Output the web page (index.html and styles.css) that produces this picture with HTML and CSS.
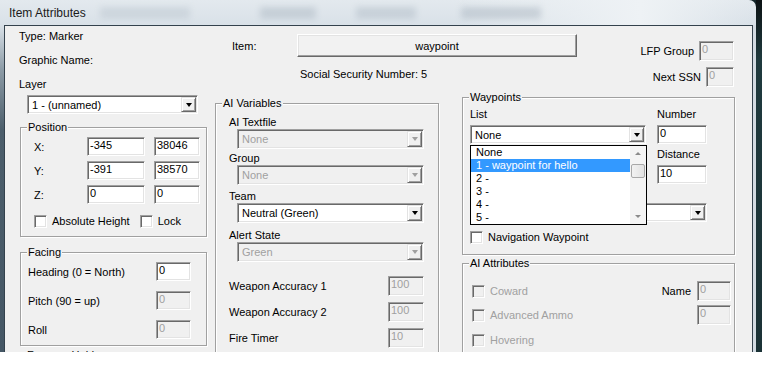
FILE: index.html
```html
<!DOCTYPE html>
<html lang="en">
<head>
  <title>Item Attributes</title>
  <meta charset='utf-8'>
  <link rel="stylesheet" href="styles.css">
</head>
<body>
  <div class='screen'>
    <div class='win'>
      <div class='titlebar'>
        <span class='title'>Item Attributes</span>
        <span class='haze haze_1'></span>
        <span class='haze haze_2'></span>
        <span class='haze haze_3'></span>
        <span class='haze haze_4'></span>
      </div>

      <div class='client'>
        <!-- left column : type, layer, position, facing -->
        <div class='col col_left'>
          <div class='type'>Type: Marker</div>
          <div class='graphic'>Graphic Name:</div>
          <div class='layer_label'>Layer</div>
          <div class='combo layer_combo'><span class='value'>1 - (unnamed)</span><span class='drop'></span></div>

          <fieldset class='group position'>
            <legend>Position</legend>
            <div class='pos_body'>
              <div class='pos_grid'>
                <span>X:</span><span class='edit'>-345</span><span class='edit'>38046</span>
                <span>Y:</span><span class='edit'>-391</span><span class='edit'>38570</span>
                <span>Z:</span><span class='edit'>0</span><span class='edit'>0</span>
              </div>
              <div class='checks'>
                <span class='check'><span class='box'></span>Absolute Height</span>
                <span class='check'><span class='box'></span>Lock</span>
              </div>
            </div>
          </fieldset>

          <fieldset class='group facing'>
            <legend>Facing</legend>
            <div class='facing_grid'>
              <span>Heading (0 = North)</span><span class='edit'>0</span>
              <span>Pitch (90 = up)</span><span class='edit disabled'>0</span>
              <span>Roll</span><span class='edit disabled'>0</span>
            </div>
          </fieldset>
          <div class='cut'>Forearm Hold</div>
        </div>

        <!-- middle column : item button, ssn, ai variables -->
        <div class='col col_mid'>
          <div class='item_row'>
            <span class='item_label'>Item:</span>
            <span class='button item_button'>waypoint</span>
          </div>
          <div class='ssn'>Social Security Number: 5</div>

          <fieldset class='group aivars'>
            <legend>AI Variables</legend>
            <div class='aivars_body'>
              <div class='lab lab_textfile'>AI Textfile</div>
              <div class='combo disabled'><span class='value'>None</span><span class='drop'></span></div>
              <div class='lab lab_group'>Group</div>
              <div class='combo disabled'><span class='value'>None</span><span class='drop'></span></div>
              <div class='lab lab_team'>Team</div>
              <div class='combo'><span class='value'>Neutral (Green)</span><span class='drop'></span></div>
              <div class='lab lab_alert'>Alert State</div>
              <div class='combo disabled'><span class='value'>Green</span><span class='drop'></span></div>

              <div class='num_row first'><span>Weapon Accuracy 1</span><span class='edit disabled'>100</span></div>
              <div class='num_row'><span>Weapon Accuracy 2</span><span class='edit disabled'>100</span></div>
              <div class='num_row'><span>Fire Timer</span><span class='edit disabled'>10</span></div>
            </div>
          </fieldset>
        </div>

        <!-- right column : lfp, waypoints, ai attributes -->
        <div class='col col_right'>
          <div class='side_row lfp_row'><span>LFP Group</span><span class='edit disabled'>0</span></div>
          <div class='side_row nssn_row'><span>Next SSN</span><span class='edit disabled'>0</span></div>

          <fieldset class='group waypoints'>
            <legend>Waypoints</legend>
            <div class='wp_body'>
              <div class='wp_cols'>
                <div class='wp_left'>
                  <div>List</div>
                  <div class='combo wp_list'><span class='value'>None</span><span class='drop'></span></div>
                  <div class='combo wp_path'><span class='value'></span><span class='drop'></span></div>

                  <!-- open dropdown of the list combo -->
                  <div class='droplist'>
                    <div class='items'>
                      <div class='opt'>None</div>
                      <div class='opt selected'>1 - waypoint for hello</div>
                      <div class='opt'>2 -</div>
                      <div class='opt'>3 -</div>
                      <div class='opt'>4 -</div>
                      <div class='opt'>5 -</div>
                    </div>
                    <div class='scroll'>
                      <span class='arrow up'></span>
                      <span class='thumb'></span>
                      <span class='arrow down'></span>
                    </div>
                  </div>
                </div>
                <div class='wp_right'>
                  <div>Number</div>
                  <span class='edit wp_num'>0</span>
                  <div class='wp_dist_label'>Distance</div>
                  <span class='edit wp_dist'>10</span>
                </div>
              </div>
              <span class='check nav_check'><span class='box'></span>Navigation Waypoint</span>
            </div>
          </fieldset>

          <fieldset class='group aiattr'>
            <legend>AI Attributes</legend>
            <div class='aiattr_body'>
              <div class='attr_row'>
                <span class='check disabled'><span class='box'></span>Coward</span>
                <span class='name_box'><span>Name</span><span class='edit disabled'>0</span></span>
              </div>
              <div class='attr_row second'>
                <span class='check disabled'><span class='box'></span>Advanced Ammo</span>
                <span class='edit disabled'>0</span>
              </div>
              <div class='attr_row third'>
                <span class='check disabled'><span class='box'></span>Hovering</span>
              </div>
            </div>
          </fieldset>
        </div>
      </div>
    </div>
    <div class='desk'></div>
  </div>
</body>
</html>
```

FILE: styles.css
```css
*, ::before, ::after {
  box-sizing: border-box;
  margin: 0; padding: 0;
}

body {
  background: #fff;
  font: 11px/14px "Liberation Sans", Arial, sans-serif;
  color: #000;
}

/* window and the dark desktop strip behind it */
.screen {
  display: flex;
  width: 762px; height: 352px;
  overflow: hidden;
  background: #14262a;
}
.win {
  display: flex; flex-direction: column;
  width: 756px; height: 352px;
  padding: 0 3px 0 4px;
  border-radius: 0 7px 0 0;
  background: linear-gradient(to bottom, #e3e9ee 0, #d9e1e8 25px, #8c9ba6 70px, #4c5e6b 130px, #455765 352px);
}
.desk {
  flex: 1;
  background: linear-gradient(to bottom, #0c1214 0, #1f3a3e 60px, #1b3236 352px);
}

.titlebar {
  display: flex; align-items: center;
  height: 25px;
  padding-left: 5px;
  overflow: hidden;
  background: linear-gradient(to right, transparent 60%, #eef2f5 85%, transparent);
}
.title {
  font: 12px "Liberation Sans", Arial, sans-serif;
  color: #1a1a1a;
  flex-shrink: 0;
}
/* blurred taskbar seen through the glass */
.haze {
  height: 12px;
  flex-shrink: 0;
  filter: blur(3px);
  opacity: .45;
}
.haze_1 { width: 90px; margin-left: 14px; background: #b9c4cd; }
.haze_2 { width: 56px; margin-left: 70px; background: #a9b5c0; }
.haze_3 { width: 60px; margin-left: 40px; background: #adb9c4; }
.haze_4 { width: 80px; margin-left: 45px; background: #a6b2bd; }

.client {
  display: flex; align-items: flex-start;
  flex: 1;
  padding-left: 14px;
  overflow: hidden;
  background: #f0f0f0;
  border: 1px solid #34424d; border-bottom: 0;
  box-shadow: 3px 0 0 #d3dbe2;
}
.col { flex-shrink: 0; }

/* shared controls */
.group {
  border: 1px solid #a0a0a0;
  box-shadow: inset 1px 1px #fff, 1px 1px #fff;
}
.group > legend {
  margin-left: 6px; padding: 0 1px;
  line-height: 14px;
  background: #f0f0f0;
}
.edit {
  display: block;
  height: 19px;
  padding-left: 2px;
  line-height: 15px;
  background: #fff;
  border: 1px solid; border-color: #a0a0a0 #fff #fff #a0a0a0;
  box-shadow: inset 1px 1px #696969, inset -1px -1px #e3e3e3;
}
.edit.disabled {
  background: #f0f0f0;
  color: #a0a0a0;
}
.combo {
  display: flex; align-items: stretch;
  height: 20px;
  padding: 1px;
  background: #fff;
  border: 1px solid; border-color: #a0a0a0 #fff #fff #a0a0a0;
  box-shadow: inset 1px 1px #696969, inset -1px -1px #e3e3e3;
}
.combo > .value {
  flex: 1;
  padding-left: 3px;
  line-height: 16px;
  white-space: nowrap; overflow: hidden;
}
.combo.disabled { background: #f0f0f0; color: #a0a0a0; }
.drop {
  display: flex; align-items: center; justify-content: center;
  width: 15px;
  background: #f0f0f0;
  border: 1px solid; border-color: #e3e3e3 #696969 #696969 #e3e3e3;
  box-shadow: inset 1px 1px #fff, inset -1px -1px #a0a0a0;
}
.drop::after {
  content: '';
  width: 1px;
  border-top: 4px solid #000;
  border-left: 3px solid transparent; border-right: 3px solid transparent;
}
.combo.disabled .drop::after { border-top-color: #a0a0a0; }
.button {
  display: flex; align-items: center; justify-content: center;
  background: #f2f2f2;
  border: 1px solid; border-color: #fff #696969 #696969 #fff;
  box-shadow: inset -1px -1px #a0a0a0, inset 1px 1px #e3e3e3;
}
.check {
  display: inline-flex; align-items: center;
  gap: 5px;
  height: 13px;
  line-height: 13px;
  white-space: nowrap;
}
.check > .box {
  width: 13px; height: 13px;
  background: #fff;
  border: 1px solid; border-color: #a0a0a0 #fff #fff #a0a0a0;
  box-shadow: inset 1px 1px #696969, inset -1px -1px #e3e3e3;
}
.check.disabled { color: #a0a0a0; }
.check.disabled > .box { background: #f0f0f0; }

/* left column */
.col_left { width: 188px; }
.type { margin-top: 3px; }
.graphic, .layer_label { margin-top: 10px; }
.layer_combo { width: 171px; height: 19px; margin: 4px 0 0 8px; }
.position { width: 187px; margin: 6px 0 0 1px; }
.pos_body { padding: 3px 0 8px 13px; }
.pos_grid {
  display: grid;
  grid-template-columns: 44px 58px 46px;
  grid-auto-rows: 19px;
  column-gap: 9px; row-gap: 5px;
  align-items: center;
}
.checks { display: flex; margin-top: 11px; }
.checks > .check:first-child { margin-right: 10px; }
.facing { width: 187px; margin: 8px 0 0 1px; }
.facing_grid {
  display: grid;
  grid-template-columns: 128px 35px;
  grid-auto-rows: 19px;
  row-gap: 10px;
  align-items: center;
  padding: 3px 0 6px 7px;
}
.cut { margin-top: 2px; padding-left: 8px; }

/* middle column */
.col_mid { width: 224px; margin-left: 8px; }
.item_row { display: flex; align-items: center; margin-top: 8px; }
.item_label { flex-shrink: 0; width: 65px; margin-left: 17px; }
.item_button { flex-shrink: 0; width: 280px; height: 23px; }
.ssn { margin: 10px 0 0 85px; }
.aivars { width: 224px; margin-top: 15px; }
.aivars_body { padding: 5px 14px 30px 13px; }
.aivars_body > .combo { margin-left: 8px; }
.lab_group { margin-top: 2px; }
.lab_team { margin-top: 4px; }
.lab_alert { margin-top: 5px; }
.num_row {
  display: flex; align-items: center; justify-content: space-between;
  margin-top: 6px;
}
.num_row.first { margin-top: 14px; }
.num_row > .edit { width: 36px; height: 20px; }

/* right column */
.col_right { width: 273px; margin-left: 23px; }
.side_row {
  display: flex; align-items: center; justify-content: flex-end;
  gap: 5px;
  padding-right: 1px;
}
.side_row > .edit { height: 20px; }
.lfp_row { margin-top: 15px; }
.lfp_row > .edit { width: 35px; }
.nssn_row { margin-top: 6px; }
.nssn_row > .edit { width: 28px; }

.waypoints { margin-top: 3px; }
.wp_body { padding: 3px 0 7px 7px; }
.wp_cols { display: flex; }
.wp_left { position: relative; width: 176px; }
.wp_list { height: 19px; margin-top: 4px; }
.wp_path { width: 237px; height: 19px; margin-top: 59px; }
.wp_right { width: 50px; margin-left: 11px; }
.wp_num { margin-top: 4px; }
.wp_dist_label { margin-top: 3px; }
.wp_dist { margin-top: 4px; }
.nav_check { margin-top: 9px; }

/* the open list of the waypoint combo lies over the fields below it */
.droplist {
  position: absolute; top: 38px; left: 0;
  display: flex;
  width: 177px; height: 80px;
  background: #fff;
  border: 1px solid #000;
}
.items { flex: 1; }
.opt {
  height: 13px;
  padding-left: 5px;
  line-height: 13px;
  white-space: nowrap;
}
.opt.selected { background: #3399ff; color: #fff; }
.scroll {
  display: flex; flex-direction: column; align-items: center;
  width: 16px;
  background: #f4f4f4;
}
.arrow {
  display: flex; align-items: center; justify-content: center;
  width: 16px; height: 15px;
}
.arrow::after {
  content: '';
  width: 1px;
  border-left: 3px solid transparent; border-right: 3px solid transparent;
}
.arrow.up::after { border-bottom: 3px solid #8a8a8a; }
.arrow.down { margin-top: auto; }
.arrow.down::after { border-top: 3px solid #8a8a8a; }
.thumb {
  width: 14px; height: 14px;
  margin-top: 3px;
  background: linear-gradient(to right, #f2f2f2, #e2e2e2);
  border: 1px solid #a8a8a8;
  border-radius: 2px;
}

.aiattr { margin-top: 1px; }
.aiattr_body { padding: 11px 3px 30px 9px; }
.attr_row {
  display: flex; align-items: center; justify-content: space-between;
  height: 20px;
}
.attr_row.second { margin-top: 4px; }
.attr_row.third { margin-top: 5px; }
.attr_row .edit { width: 34px; height: 20px; }
.name_box { display: flex; align-items: center; gap: 6px; }
```
